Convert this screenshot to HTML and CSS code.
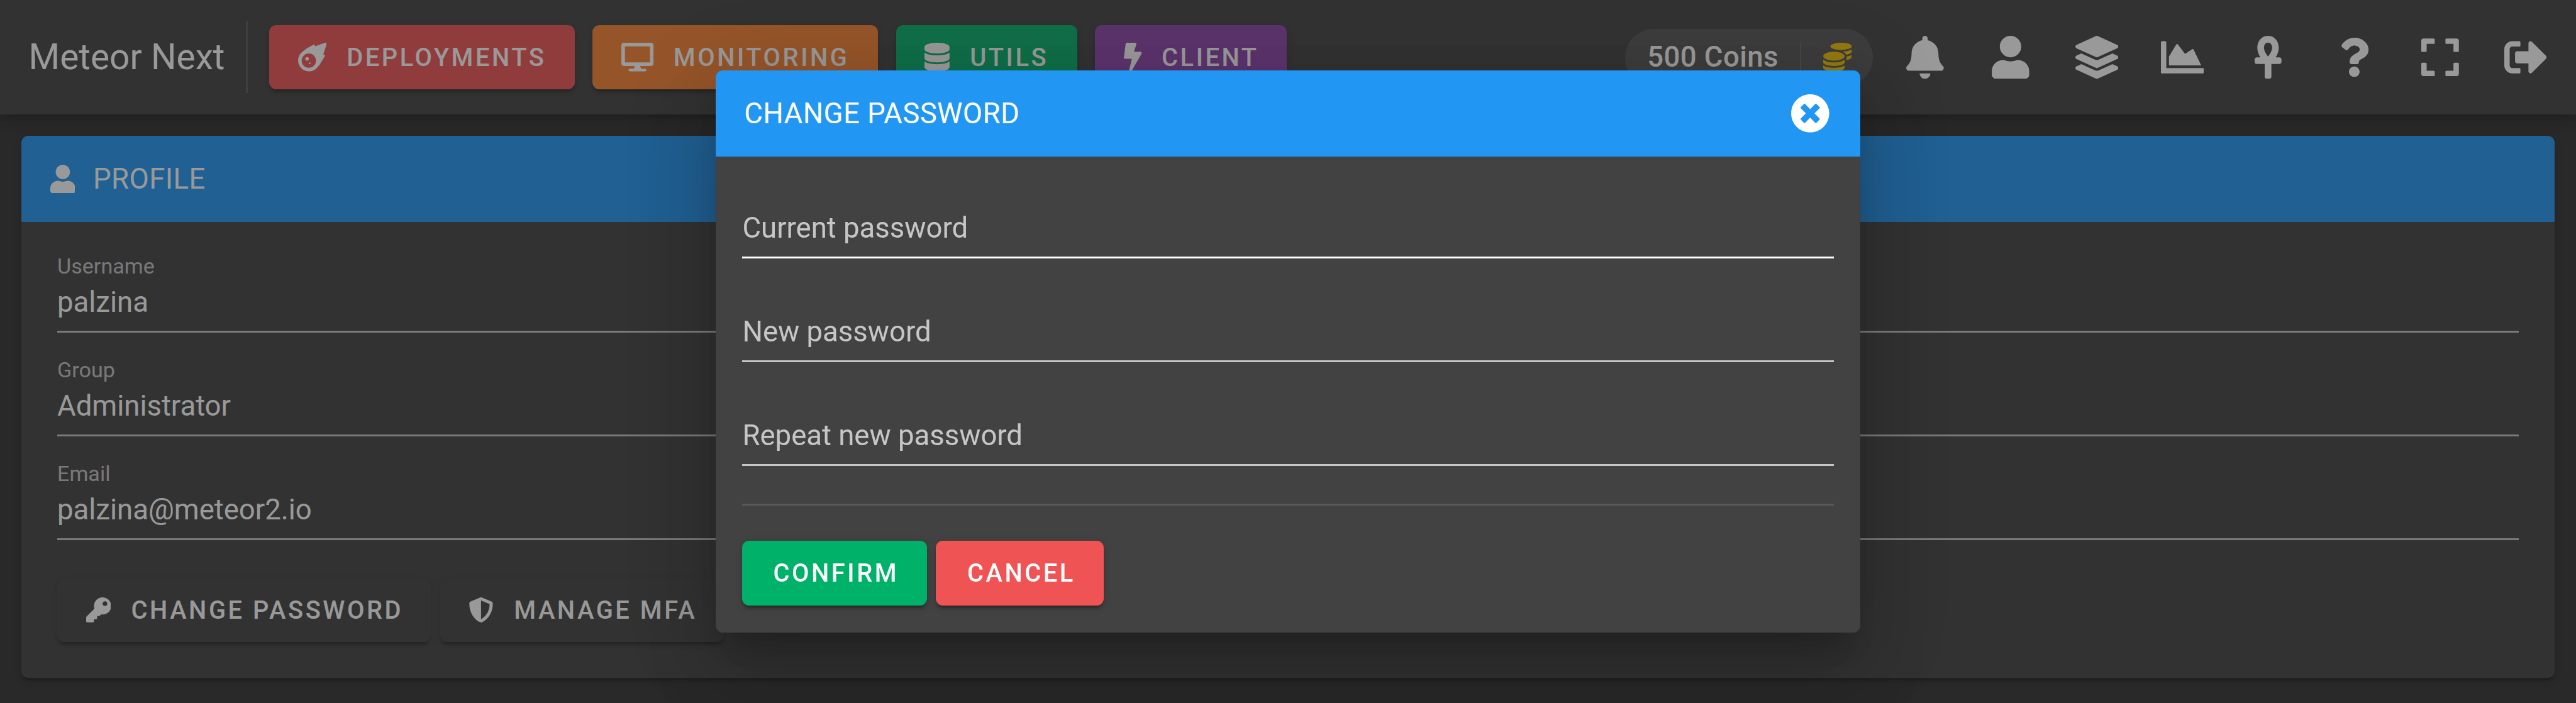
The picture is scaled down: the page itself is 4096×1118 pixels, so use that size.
FILE: index.html
```html
<!DOCTYPE html>
<html lang="en">
<head>
<meta charset="utf-8">
<title>Meteor Next</title>
<link rel="stylesheet" href="styles.css">
</head>
<body>
<svg class="sprite" aria-hidden="true">
  <symbol id="user" viewBox="0 0 448 512"><path d="M224 256c70.7 0 128-57.3 128-128S294.7 0 224 0 96 57.3 96 128s57.3 128 128 128zm89.6 32h-16.7c-22.2 10.2-46.9 16-72.9 16s-50.6-5.8-72.9-16h-16.7C60.2 288 0 348.2 0 422.4V464c0 26.5 21.5 48 48 48h352c26.5 0 48-21.5 48-48v-41.6c0-74.2-60.2-134.4-134.4-134.4z"/></symbol>
</svg>

<header class="appbar">
  <div class="brand">Meteor Next</div>
  <div class="rule"></div>
  <nav class="menu">
    <button class="btn btn-red w-deployments"><svg class="ico i16" viewBox="0 0 512 512"><path d="M511.328,20.8027c-11.60759,38.70264-34.30724,111.70173-61.30311,187.70077,6.99893,2.09372,13.4042,4,18.60653,5.59368a16.06158,16.06158,0,0,1,9.49854,22.906c-22.106,42.29635-82.69047,152.795-142.47819,214.40356-.99984,1.09373-1.99969,2.5-2.99954,3.49995A194.83046,194.83046,0,1,1,57.085,179.41009c.99985-1,2.40588-2,3.49947-3,61.59994-59.90549,171.97367-120.40473,214.37343-142.4982a16.058,16.058,0,0,1,22.90274,9.49988c1.59351,5.09368,3.49947,11.5936,5.5929,18.59351C379.34818,35.00565,452.43074,12.30281,491.12794.70921A16.18325,16.18325,0,0,1,511.328,20.8027ZM319.951,320.00207A127.98041,127.98041,0,1,0,191.97061,448.00046,127.97573,127.97573,0,0,0,319.951,320.00207Zm-127.98041-31.9996a31.9951,31.9951,0,1,1-31.9951-31.9996A31.959,31.959,0,0,1,191.97061,288.00247Zm31.9951,79.999a15.99755,15.99755,0,1,1-15.99755-15.9998A16.04975,16.04975,0,0,1,223.96571,368.00147Z"/></svg>DEPLOYMENTS</button>
    <button class="btn btn-orange w-monitoring"><svg class="ico i16" viewBox="0 0 576 512"><path d="M528 0H48C21.5 0 0 21.5 0 48v320c0 26.5 21.5 48 48 48h192l-16 48h-72c-13.3 0-24 10.7-24 24s10.7 24 24 24h272c13.3 0 24-10.7 24-24s-10.7-24-24-24h-72l-16-48h192c26.5 0 48-21.5 48-48V48c0-26.5-21.5-48-48-48zm-16 352H64V64h448v288z"/></svg>MONITORING</button>
    <button class="btn btn-green w-utils"><svg class="ico i16" viewBox="0 0 448 512"><path d="M448 73.143v45.714C448 159.143 347.667 192 224 192S0 159.143 0 118.857V73.143C0 32.857 100.333 0 224 0s224 32.857 224 73.143zM448 176v102.857C448 319.143 347.667 352 224 352S0 319.143 0 278.857V176c48.125 33.143 136.208 48.572 224 48.572S399.874 209.143 448 176zm0 160v102.857C448 479.143 347.667 512 224 512S0 479.143 0 438.857V336c48.125 33.143 136.208 48.572 224 48.572S399.874 369.143 448 336z"/></svg>UTILS</button>
    <button class="btn btn-purple w-client"><svg class="ico i16" viewBox="0 0 320 512"><path d="M296 160H180.6l42.6-129.8C227.2 15 215.7 0 200 0H56C44 0 33.8 8.9 32.2 20.8l-32 240C-1.7 275.2 9.5 288 24 288h118.7L96.6 482.5c-3.6 15.2 8 29.5 23.3 29.5 8.4 0 16.4-4.4 20.8-12l176-304c9.3-15.9-2.2-36-20.7-36z"/></svg>CLIENT</button>
  </nav>
  <div class="coins">
    <span class="coins-label">500 Coins</span>
    <span class="coins-rule"></span>
    <svg class="ico i16 gold" viewBox="0 0 512 512"><path d="M0 405.3V448c0 35.3 86 64 192 64s192-28.7 192-64v-42.7C342.7 434.4 267.2 448 192 448S41.3 434.4 0 405.3zM320 128c106 0 192-28.7 192-64S426 0 320 0 128 28.7 128 64s86 64 192 64zM0 300.4V352c0 35.3 86 64 192 64s192-28.7 192-64v-51.6c-41.3 34-116.9 51.6-192 51.6S41.3 334.4 0 300.4zm416 11c57.3-11.1 96-31.7 96-55.4v-42.7c-23.2 16.4-57.3 27.6-96 34.5v63.6zM192 160C86 160 0 195.8 0 240s86 80 192 80 192-35.8 192-80-86-80-192-80zm219.3 56.3c60-10.8 100.7-32 100.7-56.3v-42.7c-35.5 25.1-96.5 38.6-160.7 41.8 29.5 14.3 51.2 33.5 60 57.2z"/></svg>
  </div>
  <nav class="tools">
    <button class="tool"><svg class="ico i24" viewBox="0 0 448 512"><path d="M224 512c35.32 0 63.97-28.65 63.97-64H160.03c0 35.35 28.65 64 63.97 64zm215.39-149.71c-19.32-20.76-55.47-51.99-55.47-154.29 0-77.7-54.48-139.9-127.94-155.16V32c0-17.67-14.32-32-31.98-32s-31.98 14.33-31.98 32v20.84C118.56 68.1 64.08 130.3 64.08 208c0 102.3-36.15 133.53-55.47 154.29-6 6.45-8.66 14.16-8.61 21.71.11 16.4 12.98 32 32.1 32h383.8c19.12 0 32-15.6 32.1-32 .05-7.55-2.61-15.27-8.61-21.71z"/></svg></button>
    <button class="tool"><svg class="ico i24" viewBox="0 0 448 512"><use href="#user"/></svg></button>
    <button class="tool"><svg class="ico i24" viewBox="0 0 512 512"><path d="M12.41 148.02l232.94 105.67c6.8 3.09 14.49 3.09 21.29 0l232.94-105.67c16.55-7.51 16.55-32.52 0-40.03L266.65 2.31a25.607 25.607 0 0 0-21.29 0L12.41 107.98c-16.55 7.51-16.55 32.53 0 40.04zm487.18 88.28l-58.09-26.33-161.64 73.27c-7.56 3.43-15.59 5.17-23.86 5.17s-16.29-1.74-23.86-5.17L70.51 209.97l-58.1 26.33c-16.55 7.5-16.55 32.5 0 40l232.94 105.59c6.8 3.08 14.49 3.08 21.29 0L499.59 276.3c16.55-7.5 16.55-32.5 0-40zm0 127.8l-57.87-26.23-161.86 73.37c-7.56 3.43-15.59 5.17-23.86 5.17s-16.29-1.74-23.86-5.17L70.29 337.87 12.41 364.1c-16.55 7.5-16.55 32.5 0 40l232.94 105.59c6.8 3.08 14.49 3.08 21.29 0L499.59 404.1c16.55-7.5 16.55-32.5 0-40z"/></svg></button>
    <button class="tool"><svg class="ico i24" viewBox="0 0 512 512"><path d="M500 384c6.6 0 12 5.4 12 12v40c0 6.6-5.4 12-12 12H12c-6.6 0-12-5.4-12-12V76c0-6.6 5.4-12 12-12h40c6.6 0 12 5.4 12 12v308h436zM372.7 159.5L288 216l-85.3-113.7c-5.1-6.8-15.5-6.3-19.9 1L96 248v104h384l-89.9-187.8c-3.2-6.5-11.4-8.7-17.4-4.7z"/></svg></button>
    <button class="tool"><svg class="ico i24" viewBox="0 0 320 512"><path d="M296 256h-44.62C272.46 222.55 288 181.65 288 144 288 55.63 230.69 0 160 0S32 55.63 32 144c0 37.65 15.54 78.55 36.62 112H24c-13.25 0-24 10.74-24 24v32c0 13.25 10.75 24 24 24h96v152c0 13.25 10.75 24 24 24h32c13.25 0 24-10.75 24-24V336h96c13.25 0 24-10.75 24-24v-32c0-13.26-10.75-24-24-24zM160 80c29.61 0 48 24.52 48 64 0 34.66-27.14 78.14-48 100.87-20.86-22.72-48-66.21-48-100.87 0-39.48 18.39-64 48-64z"/></svg></button>
    <button class="tool"><svg class="ico i22" viewBox="0 0 384 512"><path d="M202.021 0C122.202 0 70.503 32.703 29.914 91.026c-7.363 10.58-5.093 25.086 5.178 32.874l43.138 32.709c10.373 7.865 25.132 6.026 33.253-4.148 25.049-31.381 43.63-49.449 82.757-49.449 30.764 0 68.816 19.799 68.816 49.631 0 22.552-18.617 34.134-48.993 51.164-35.423 19.86-82.299 44.576-82.299 106.405V320c0 13.255 10.745 24 24 24h72.471c13.255 0 24-10.745 24-24v-5.773c0-42.86 125.268-44.645 125.268-160.627C377.504 66.256 286.902 0 202.021 0zM192 373.459c-38.196 0-69.271 31.075-69.271 69.271 0 38.195 31.075 69.27 69.271 69.27s69.271-31.075 69.271-69.271-31.075-69.27-69.271-69.27z"/></svg></button>
    <button class="tool"><svg class="ico i24" viewBox="0 0 448 512"><path d="M0 180V56c0-13.3 10.7-24 24-24h124c6.6 0 12 5.4 12 12v40c0 6.6-5.4 12-12 12H64v84c0 6.6-5.4 12-12 12H12c-6.6 0-12-5.4-12-12zM288 44v40c0 6.6 5.4 12 12 12h84v84c0 6.6 5.4 12 12 12h40c6.6 0 12-5.4 12-12V56c0-13.3-10.7-24-24-24H300c-6.6 0-12 5.4-12 12zm148 276h-40c-6.6 0-12 5.4-12 12v84h-84c-6.6 0-12 5.4-12 12v40c0 6.6 5.4 12 12 12h124c13.3 0 24-10.7 24-24V332c0-6.6-5.4-12-12-12zM160 468v-40c0-6.6-5.4-12-12-12H64v-84c0-6.6-5.4-12-12-12H12c-6.6 0-12 5.4-12 12v124c0 13.3 10.7 24 24 24h124c6.6 0 12-5.4 12-12z"/></svg></button>
    <button class="tool"><svg class="ico i24" viewBox="0 0 512 512"><path d="M497 273L329 441c-15 15-41 4.5-41-17v-96H152c-13.3 0-24-10.7-24-24v-96c0-13.3 10.7-24 24-24h136V88c0-21.4 25.9-32 41-17l168 168c9.3 9.4 9.3 24.6 0 34zM192 436v-40c0-6.6-5.4-12-12-12H96c-17.7 0-32-14.3-32-32V160c0-17.7 14.3-32 32-32h84c6.6 0 12-5.4 12-12V76c0-6.6-5.4-12-12-12H96c-53 0-96 43-96 96v192c0 53 43 96 96 96h84c6.6 0 12-5.4 12-12z"/></svg></button>
  </nav>
</header>

<main class="content">
  <section class="card">
    <div class="card-head"><svg class="ico i16" viewBox="0 0 448 512"><use href="#user"/></svg><span class="title">PROFILE</span></div>
    <div class="card-body">
      <div class="field"><span class="field-label">Username</span><span class="field-value">palzina</span></div>
      <div class="field"><span class="field-label">Group</span><span class="field-value">Administrator</span></div>
      <div class="field"><span class="field-label">Email</span><span class="field-value">palzina@meteor2.io</span></div>
      <div class="actions">
        <button class="btn w-change"><svg class="ico i14" viewBox="0 0 512 512"><path d="M512 176.001C512 273.203 433.202 352 336 352c-11.22 0-22.19-1.062-32.827-3.069l-24.012 27.014A23.999 23.999 0 0 1 261.223 384H224v40c0 13.255-10.745 24-24 24h-40v40c0 13.255-10.745 24-24 24H24c-13.255 0-24-10.745-24-24v-78.059c0-6.365 2.529-12.47 7.029-16.971l161.802-161.802C163.108 213.814 160 195.271 160 176 160 78.798 238.797.001 335.999 0 433.488-.001 512 78.511 512 176.001zM336 128c0 26.51 21.49 48 48 48s48-21.49 48-48-21.49-48-48-48-48 21.49-48 48z"/></svg>CHANGE PASSWORD</button>
        <button class="btn w-mfa"><svg class="ico i14" viewBox="0 0 512 512"><path d="M466.5 83.7l-192-80a48.15 48.15 0 0 0-36.9 0l-192 80C27.7 91.1 16 108.6 16 128c0 198.5 114.5 335.7 221.5 380.3 11.8 4.9 25.1 4.9 36.9 0C360.1 472.6 496 349.3 496 128c0-19.4-11.7-36.9-29.5-44.3zM256.1 446.3l-.1-381 175.9 73.3c-3.3 151.4-82.1 261.1-175.8 307.7z"/></svg>MANAGE MFA</button>
      </div>
    </div>
  </section>
</main>

<div class="overlay">
  <section class="dialog">
    <div class="dialog-head">
      <span class="title">CHANGE PASSWORD</span>
      <svg class="ico i22" viewBox="0 0 512 512"><path d="M256 8C119 8 8 119 8 256s111 248 248 248 248-111 248-248S393 8 256 8zm121.6 313.1c4.7 4.7 4.7 12.3 0 17L338 377.6c-4.7 4.7-12.3 4.7-17 0L256 312l-65.1 65.6c-4.7 4.7-12.3 4.7-17 0L134.4 338c-4.7-4.7-4.7-12.3 0-17l65.6-65-65.6-65.1c-4.7-4.7-4.7-12.3 0-17l39.6-39.6c4.7-4.7 12.3-4.7 17 0l65 65.7 65.1-65.6c4.7-4.7 12.3-4.7 17 0l39.6 39.6c4.7 4.7 4.7 12.3 0 17L312 256l65.6 65.1z"/></svg>
    </div>
    <div class="dialog-body">
      <div class="input input-focused">Current password</div>
      <div class="input">New password</div>
      <div class="input">Repeat new password</div>
      <div class="separator"></div>
      <div class="actions">
        <button class="btn btn-green btn-plain w-confirm">CONFIRM</button>
        <button class="btn btn-red btn-plain w-cancel">CANCEL</button>
      </div>
    </div>
  </section>
</div>
</body>
</html>
```
FILE: styles.css
```css
/* 1rem is one unit of the 1440-unit wide layout */
html {
  font-size: calc(100vw / 1440);
}

*, *::before, *::after {
  box-sizing: border-box;
}

body {
  margin: 0;
  height: 100vh;
  overflow: hidden;
  display: flex;
  flex-direction: column;
  background: #303030;
  color: #fff;
  font: 400 16rem/20rem Roboto, "Liberation Sans", sans-serif;
}

.sprite {
  display: none;
}

button {
  margin: 0;
  padding: 0;
  border: 0;
  background: none;
  color: inherit;
  font: inherit;
}

.ico {
  display: block;
  flex: none;
  width: auto;
  fill: currentColor;
}
.i14 { height: 14rem; }
.i16 { height: 16rem; }
.i22 { height: 22rem; }
.i24 { height: 24rem; }

/* Buttons */
.btn {
  display: flex;
  align-items: center;
  gap: 11.3rem;
  height: 36rem;
  padding: .8rem 0 0 16rem;
  border-radius: 4rem;
  background: #424242;
  font-size: 14rem;
  font-weight: 500;
  letter-spacing: 1.25rem;
  white-space: nowrap;
  box-shadow: 0 3rem 1rem -2rem rgba(0, 0, 0, .2), 0 2rem 2rem rgba(0, 0, 0, .14), 0 1rem 5rem rgba(0, 0, 0, .12);
}
.btn .ico {
  margin-bottom: .8rem;
}
.btn-plain {
  justify-content: center;
  padding-left: 1.4rem;
}
.btn-red { background: #ef5354; }
.btn-orange { background: #fa8131; }
.btn-green { background: #00b16a; }
.btn-purple { background: #8e44ad; }

.w-deployments { width: 170.7rem; }
.w-monitoring { width: 159.7rem; }
.w-utils { width: 101.2rem; }
.w-client { width: 107.3rem; }
.w-change { width: 209rem; }
.w-mfa { width: 158.6rem; }
.w-confirm { width: 103.3rem; }
.w-cancel { width: 93.8rem; }

/* App bar */
.appbar {
  position: relative;
  flex: none;
  display: flex;
  align-items: center;
  height: 64rem;
  padding: 0 4rem 0 16rem;
  background: #424242;
  box-shadow: 0 2rem 4rem -1rem rgba(0, 0, 0, .2), 0 4rem 5rem rgba(0, 0, 0, .14), 0 1rem 10rem rgba(0, 0, 0, .12);
}
.brand {
  width: 121.5rem;
  font-size: 20rem;
  white-space: nowrap;
}
.rule {
  width: 1rem;
  height: 40rem;
  margin-right: 12rem;
  background: rgba(255, 255, 255, .12);
}
.menu {
  display: flex;
  gap: 10rem;
}
.coins {
  display: flex;
  align-items: center;
  gap: 12rem;
  width: 138.6rem;
  height: 32rem;
  margin: 0 5rem 0 auto;
  padding: 0 12rem 0 12.4rem;
  border-radius: 16rem;
  background: #555;
  font-weight: 500;
  white-space: nowrap;
}
.coins-label {
  letter-spacing: .15rem;
}
.coins-rule {
  width: 1rem;
  height: 16rem;
  margin-left: auto;
  background: rgba(255, 255, 255, .12);
}
.gold { color: #f6c500; }
.tools {
  display: flex;
}
.tool {
  display: flex;
  align-items: center;
  justify-content: center;
  width: 48rem;
  height: 48rem;
}

/* Profile card */
.content {
  padding: 12rem;
}
.card {
  height: 303rem;
  border-radius: 4rem;
  background: #424242;
  box-shadow: 0 3rem 1rem -2rem rgba(0, 0, 0, .2), 0 2rem 2rem rgba(0, 0, 0, .14), 0 1rem 5rem rgba(0, 0, 0, .12);
}
.card-head {
  display: flex;
  align-items: center;
  gap: 10rem;
  height: 48rem;
  padding-left: 16rem;
  border-radius: 4rem 4rem 0 0;
  background: #2196f3;
}
.title {
  padding-top: .8rem;
  letter-spacing: .15rem;
}
.card-body {
  padding: 4rem 20rem 0;
}
.field {
  display: flex;
  flex-direction: column;
  height: 58rem;
  padding-top: 10.8rem;
  border-bottom: 1.06rem solid rgba(255, 255, 255, .7);
}
.field-label {
  margin-bottom: .6rem;
  color: rgba(255, 255, 255, .7);
  font-size: 12rem;
}
.actions {
  display: flex;
  gap: 5rem;
}
.card-body .actions {
  margin-top: 21rem;
}

/* Dialog */
.overlay {
  position: fixed;
  inset: 0;
  display: flex;
  align-items: center;
  justify-content: center;
  background: rgba(33, 33, 33, .46);
}
.dialog {
  width: 640rem;
  height: 314rem;
  border-radius: 4rem;
  background: #424242;
  box-shadow: 0 11rem 15rem -7rem rgba(0, 0, 0, .2), 0 24rem 38rem 3rem rgba(0, 0, 0, .14), 0 9rem 46rem 8rem rgba(0, 0, 0, .12);
}
.dialog-head {
  display: flex;
  align-items: center;
  justify-content: space-between;
  height: 48rem;
  padding: 0 17rem 0 16rem;
  border-radius: 4rem 4rem 0 0;
  background: #2196f3;
}
.dialog-body {
  padding: 0 15rem;
}
.input {
  height: 58rem;
  padding-top: 31.4rem;
  border-bottom: 1.06rem solid rgba(255, 255, 255, .7);
  color: rgba(255, 255, 255, .7);
}
.input:first-child {
  height: 57rem;
  padding-top: 30.4rem;
}
.input-focused {
  border-bottom-color: #fff;
}
.separator {
  height: 1rem;
  margin: 21rem 0 20rem;
  background: rgba(255, 255, 255, .12);
}
```
